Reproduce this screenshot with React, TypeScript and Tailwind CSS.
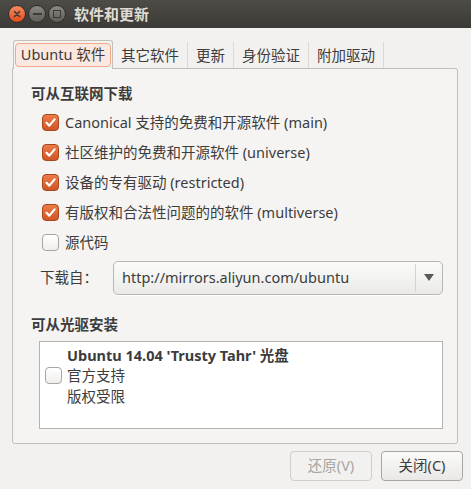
import React from "react";

const FONT = { fontFamily: '"Noto Sans", "Noto Sans CJK SC", sans-serif' };

const sources = [
  { label: "Canonical 支持的免费和开源软件 (main)", on: true },
  { label: "社区维护的免费和开源软件 (universe)", on: true },
  { label: "设备的专有驱动 (restricted)", on: true },
  { label: "有版权和合法性问题的的软件 (multiverse)", on: true },
  { label: "源代码", on: false },
];

const tabs = ["其它软件", "更新", "身份验证", "附加驱动"];

function CheckBox({ on }: { on: boolean }) {
  if (!on) {
    return (
      <span className="block h-[17px] w-[17px] rounded-[4px] border border-[#a9a6a1] bg-gradient-to-b from-[#ffffff] to-[#efeeec]" />
    );
  }
  return (
    <span className="flex h-[17px] w-[17px] items-center justify-center rounded-[4px] border border-[#a9461b] bg-gradient-to-b from-[#ec7b48] to-[#cf5524]">
      <svg width="13" height="13" viewBox="0 0 13 13">
        <path d="M2.5 6.8 L5.3 9.6 L10.6 3.4" fill="none" stroke="#fff" strokeWidth="2.2" strokeLinecap="round" strokeLinejoin="round" />
      </svg>
    </span>
  );
}

function TitleButton({ kind }: { kind: "close" | "min" | "max" }) {
  if (kind === "close") {
    return (
      <span className="flex h-[18px] w-[18px] items-center justify-center rounded-full border border-[#2e2d29] bg-gradient-to-b from-[#f58a5e] to-[#df4a16]">
        <svg width="8" height="8" viewBox="0 0 8 8">
          <path d="M1.5 1.5 L6.5 6.5 M6.5 1.5 L1.5 6.5" stroke="#3c3b37" strokeWidth="1.6" strokeLinecap="round" />
        </svg>
      </span>
    );
  }
  return (
    <span className="flex h-[18px] w-[18px] items-center justify-center rounded-full border border-[#2e2d29] bg-gradient-to-b from-[#8a8984] to-[#5d5c57]">
      {kind === "min" ? (
        <span className="block h-[2px] w-[9px] bg-[#3c3b37]" />
      ) : (
        <span className="block h-[8px] w-[8px] border-[1.5px] border-[#3c3b37]" />
      )}
    </span>
  );
}

export default function App() {
  return (
    <div className="flex h-[489px] w-[471px] flex-col overflow-hidden bg-[#f2f1f0] text-[#3c3c3c]" style={FONT}>
      {/* title bar */}
      <div className="flex h-[28px] items-center bg-gradient-to-b from-[#4d4c47] to-[#3b3a36] pl-[8px]">
        <div className="flex items-center gap-[2px]">
          <TitleButton kind="close" />
          <TitleButton kind="min" />
          <TitleButton kind="max" />
        </div>
        <span className="ml-[8px] text-[15px] font-bold text-[#dfdbd2]">软件和更新</span>
      </div>

      {/* tabs */}
      <div className="mt-[12px] flex h-[29px] items-end pl-[13px]">
        <div className="relative z-10 flex h-[29px] w-[100px] items-center justify-center rounded-t-[3px] border border-b-0 border-[#c3c0bb] bg-[#f5f4f3]">
          <span className="flex h-[24px] items-center rounded-[4px] border border-[#f2a988] bg-[#fbe8e0] px-[5px] text-[14.5px] text-[#3c3c3c]">
            Ubuntu 软件
          </span>
        </div>
        {tabs.map((t) => (
          <div
            key={t}
            className="flex h-[27px] items-center border-r border-[#dcd9d5] px-[8px] text-[14.5px] text-[#3c3c3c]"
          >
            {t}
          </div>
        ))}
      </div>

      {/* panel */}
      <div className="mx-[12px] mr-[13px] -mt-[1px] flex h-[376px] flex-col rounded-b-[3px] rounded-tr-[3px] border border-[#c3c0bb] bg-[#f5f4f3] pl-[18px] pr-[14px]">
        <div className="mt-[14px] text-[14.5px] font-bold text-[#3c3c3c]">可从互联网下载</div>
        <div className="mt-[3px] flex flex-col pl-[11px]">
          {sources.map((s) => (
            <div key={s.label} className="flex h-[30px] items-center gap-[6px] text-[14.5px]">
              <CheckBox on={s.on} />
              <span>{s.label}</span>
            </div>
          ))}
        </div>
        <div className="mt-[3px] flex h-[34px] items-center">
          <span className="w-[82px] pl-[9px] text-[14.5px]">下载自：</span>
          <div className="flex h-[34px] flex-1 items-center rounded-[5px] border border-[#b9b6b1] bg-gradient-to-b from-[#fbfbfa] to-[#ebeae8] shadow-[0_1px_0_rgba(255,255,255,0.8)]">
            <span className="flex-1 pl-[8px] text-[14.5px]">http://mirrors.aliyun.com/ubuntu</span>
            <span className="h-[28px] w-px bg-[#d6d3cf]" />
            <span className="flex w-[26px] justify-center">
              <svg width="10" height="7" viewBox="0 0 10 7">
                <path d="M0 0 L10 0 L5 7 Z" fill="#5a5a5a" />
              </svg>
            </span>
          </div>
        </div>
        <div className="mt-[19px] text-[14.5px] font-bold">可从光驱安装</div>
        <div className="mt-[5px] ml-[8px] flex h-[88px] items-start border border-[#b5b2ad] bg-white pl-[5px] pt-[3px]">
          <div className="flex items-center">
            <CheckBox on={false} />
            <div className="ml-[5px] flex flex-col text-[14.5px] leading-[20.5px]">
              <span className="font-bold">Ubuntu 14.04 'Trusty Tahr' 光盘</span>
              <span>官方支持</span>
              <span>版权受限</span>
            </div>
          </div>
        </div>
      </div>

      {/* buttons */}
      <div className="mt-[7px] flex justify-end gap-[9px] pr-[8px]">
        <button className="h-[30px] w-[82px] rounded-[4px] border border-[#d0cdc8] bg-[#f2f1f0] text-[14.5px] text-[#a7a5a1]">
          还原(V)
        </button>
        <button className="h-[30px] w-[82px] rounded-[4px] border border-[#a9a6a1] bg-gradient-to-b from-[#fbfbfa] to-[#e9e8e6] text-[14.5px] text-[#3c3c3c]">
          关闭(C)
        </button>
      </div>
    </div>
  );
}
